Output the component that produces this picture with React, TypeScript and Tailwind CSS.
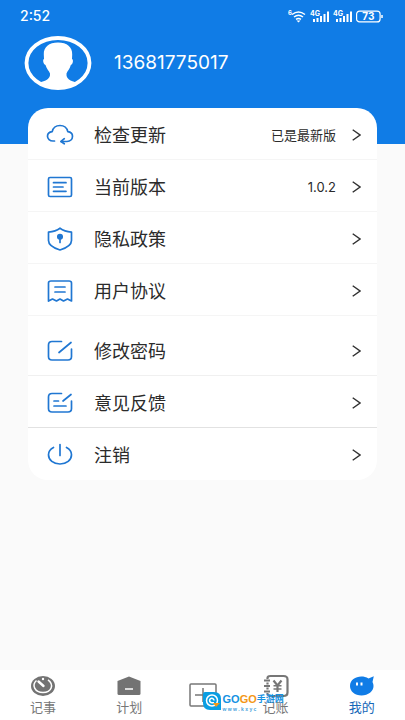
import type { ReactNode } from "react"

type Row = { label: string; value?: string; icon: ReactNode; line?: string }

const stroke = {
  fill: "none",
  stroke: "#2077d2",
  strokeWidth: 1.7,
  strokeLinecap: "round" as const,
  strokeLinejoin: "round" as const,
}

function RowIcon({ children }: { children: ReactNode }) {
  return (
    <svg width="28" height="24" viewBox="0 0 28 24" aria-hidden="true" className="shrink-0" {...stroke}>
      {children}
    </svg>
  )
}

const general: Row[] = [
  {
    label: "检查更新",
    value: "已是最新版",
    icon: (
      <RowIcon>
        <path d="M8.500 18H7C3.800 18 1.500 15.800 1.500 13.300C1.500 10.700 3.600 8.900 6.200 8.600C7 5.200 10 2.500 14 2.500S21 5.200 21.800 8.600C24.500 8.900 26.500 10.700 26.500 13.300C26.500 16.200 24.200 18.500 21 18.500H15" />
        <path d="M18.300 15.700 15 18.500l3.300 2.300" />
      </RowIcon>
    ),
  },
  {
    label: "当前版本",
    value: "1.0.2",
    icon: (
      <RowIcon>
        <rect x="2.500" y="2.500" width="23" height="19" rx="1.500" />
        <path d="M7.500 7.700H20M7.500 12H17M7.500 16.300H20" />
      </RowIcon>
    ),
  },
  {
    label: "隐私政策",
    icon: (
      <RowIcon>
        <path d="M14 1.200C17 3.400 21 4.700 25.500 5.200V13.500C25.500 17.500 20.500 21 14 23C7.500 21 2.500 17.500 2.500 13.500V5.200C7 4.700 11 3.400 14 1.200Z" />
        <circle cx="14" cy="9.800" r="2.200" fill="#2077d2" />
        <path d="M14 10v5.500" />
      </RowIcon>
    ),
  },
  {
    label: "用户协议",
    icon: (
      <RowIcon>
        <path d="M2.500 22V4Q2.500 2 5 2H23Q25.500 2 25.500 4V22L21.500 20 17.500 22 14 20 10.500 22 6.500 20Z" />
        <path d="M9 8h10M9 13h10" />
      </RowIcon>
    ),
  },
]

const account: Row[] = [
  {
    label: "修改密码",
    line: "border-[#f0f0f0]",
    icon: (
      <RowIcon>
        <path d="M15.500 2.500H6Q2.500 2.500 2.500 6V17.500Q2.500 21 6 21H22Q25.500 21 25.500 17.500V10M13 13.500 25 3.500" />
      </RowIcon>
    ),
  },
  {
    label: "意见反馈",
    line: "border-[#e2e2e2]",
    icon: (
      <RowIcon>
        <path d="M15.500 2.500H6Q2.500 2.500 2.500 6V17.500Q2.500 21 6 21H22Q25.500 21 25.500 17.500V10M17 10 25 3.500M8 10h4.500M8 15h12" />
      </RowIcon>
    ),
  },
  {
    label: "注销",
    line: "border-transparent",
    icon: (
      <RowIcon>
        <path d="M14 1.500v11M7.500 4.500C4.500 6 2.500 8.700 2.500 11.800C2.500 17 7.500 21 14 21S25.500 17 25.500 11.800C25.500 8.700 23.500 6 20.500 4.500" />
      </RowIcon>
    ),
  },
]

function MenuRow({ label, value, icon, line = "border-[#f5f5f5]" }: Row) {
  return (
    <li className={`border-b ${line}`}>
      <button type="button" className="flex h-[51px] w-full items-center pl-[18px] pr-4 pt-0.5 text-left">
        {icon}
        <span className="ml-5 flex-1 pt-0.5 text-[18px] leading-6">{label}</span>
        {value && <span className="mr-4 text-[13px] leading-5">{value}</span>}
        <svg width="9" height="12" viewBox="0 0 9 12" fill="none" stroke="#333" strokeWidth="1.400" aria-hidden="true">
          <path d="M.7.700 8 6 .7 11.300" />
        </svg>
      </button>
    </li>
  )
}

function Signal() {
  return (
    <svg width="19" height="13" viewBox="0 0 19 13" fill="#fff" aria-hidden="true">
      <text x="0" y="6" fontSize="7" fontWeight="700">4G</text>
      <path d="M3 9h2v3H3zM6.500 8h2v4h-2zM10 6h2v6h-2zM13.500 4h2v8h-2zM17 1.500h2V12h-2z" />
    </svg>
  )
}

function StatusBar() {
  return (
    <div className="flex h-8 items-center justify-between pl-5 pr-[22px]">
      <span className="text-[14px] font-medium leading-5">2:52</span>
      <div className="flex items-center gap-1">
        <svg width="18" height="13" viewBox="0 0 18 13" fill="none" stroke="#fff" strokeWidth="1.500" aria-label="Wi-Fi 6">
          <text x="0" y="5" fontSize="6" fontWeight="700" fill="#fff" stroke="none">6</text>
          <path d="M4 4.500Q10.500-.5 17 4.500M6 7Q10.500 3.500 15 7M8 9.300Q10.500 7.500 13 9.300" />
          <path d="M8.500 10.500h4L10.500 12.500Z" fill="#fff" stroke="none" />
        </svg>
        <Signal />
        <Signal />
        <svg width="27" height="13" viewBox="0 0 27 13" fill="none" stroke="#fff" aria-label="73%">
          <rect x=".6" y="1.100" width="23.500" height="10.800" rx="3" strokeWidth="1.200" />
          <path d="M26 5v3" strokeWidth="1.500" />
          <text x="12.300" y="10" textAnchor="middle" fontSize="10" fontWeight="700" fill="#fff" stroke="none">73</text>
        </svg>
      </div>
    </div>
  )
}

function Avatar() {
  return (
    <svg width="68" height="54" viewBox="0 0 68 54" aria-hidden="true">
      <ellipse cx="34" cy="27" rx="31.500" ry="25" fill="#107ce6" stroke="#fff" strokeWidth="3.800" />
      <path fill="#fff" d="M34 6.500C25 6.500 19.500 11 19.800 18.500L20 23C18.500 23.500 19 28 21.500 29C22.500 33 25 34.500 26 37.500C26.500 43 22 45 14.500 46.500C25 54 43 54 53.500 46.500C46 45 42 43 42.500 37.500C43.500 34.500 46 33 46.800 29C49.300 28 49.500 23.500 48 23L48.200 18.500C48.500 11 43 6.500 34 6.500Z" />
    </svg>
  )
}

function Watermark() {
  return (
    <div className="absolute left-1/2 top-[22px] flex font-['Liberation_Sans','Noto_Sans_CJK_SC',sans-serif] font-bold">
      <svg width="18" height="18" viewBox="0 0 18 18" aria-hidden="true">
        <path d="M0 2Q0 0 2 0H11Q18 0 18 7V18H7Q0 18 0 11Z" fill="#0a9ee2" />
        <circle cx="9" cy="8.500" r="5.500" fill="none" stroke="#fff" strokeWidth="1.500" />
        <path d="M11 8.500A2.200 2.200 0 1 0 9 10.700H11" fill="none" stroke="#fff" strokeWidth="1.500" />
        <path d="M10 11h7l-4 4Z" fill="#f59a13" />
      </svg>
      <div className="ml-0.5">
        <p className="flex text-[11px] leading-[14px]">
          <span className="text-[#1592e3]">GO</span>
          <span className="text-[#f49716]">GO</span>
          <span className="text-[9px] text-[#1592e3]">手游网</span>
        </p>
        <p className="text-[5px] leading-[6px] text-[#4aa3dc]">w w w . k x y c</p>
      </div>
    </div>
  )
}

const tabs = [
  {
    label: "记事",
    icon: (
      <svg width="26" height="22" viewBox="0 0 26 22" aria-hidden="true">
        <ellipse cx="13" cy="11" rx="12" ry="10" fill="#737373" />
        <path d="M6.500 5.500C1.500 10 4.500 17.500 13 17.500S24.500 9.500 18 4.800" fill="none" stroke="#fff" strokeWidth="1.500" />
        <path d="M8.500 6.500 13.500 11" stroke="#fff" strokeWidth="2.400" strokeLinecap="round" />
        <circle cx="13" cy="4" r="1.200" fill="#fff" />
      </svg>
    ),
  },
  {
    label: "计划",
    icon: (
      <svg width="26" height="22" viewBox="0 0 26 22" aria-hidden="true">
        <path d="M13 1.500 24.500 6V18.500Q24.500 20 23 20H3Q1.500 20 1.500 18.500V6Z" fill="#737373" />
        <path d="M9 14h8" stroke="#fff" strokeWidth="1.500" />
      </svg>
    ),
  },
  {
    label: "",
    icon: (
      <svg width="28" height="24" viewBox="0 0 28 24" fill="none" stroke="#777" strokeWidth="1.500" aria-hidden="true">
        <rect x="1" y="1" width="26" height="22" rx="1" />
        <path d="M6 12h16M14 5v14" />
      </svg>
    ),
  },
  {
    label: "记账",
    icon: (
      <svg width="26" height="24" viewBox="0 0 26 24" fill="none" stroke="#777" strokeWidth="2.200" aria-hidden="true">
        <path d="M4.500 5V4Q4.500 2 7.500 2H20.500Q24.500 2 24.500 5.500V18.500Q24.500 22 20.500 22H7.500Q4.500 22 4.500 20V19M4.500 8.500v2M4.500 13.500v2" />
        <path d="M1 6.500h6M1 12h6M1 17.500h6" />
        <path d="M10.500 6.500 14.500 11.500 18.500 6.500M14.500 11v7" />
        <path d="M10.500 11.800h8M10.500 15h8" strokeWidth="1.600" />
      </svg>
    ),
  },
  {
    label: "我的",
    active: true,
    icon: (
      <svg width="26" height="22" viewBox="0 0 26 22" aria-hidden="true">
        <path d="M19.500 3.500 24.800 1.200 23.500 7C27 14 21 20.500 12.500 20.500C6 20.500 1 16.500 1 11C1 2.500 12 -1 19.500 3.500Z" fill="#107ce6" />
        <path d="M8 7.500v3M12.500 7.500v3" stroke="#fff" strokeWidth="2" />
      </svg>
    ),
  },
]

export default function App() {
  return (
    <div className="flex min-h-screen flex-col bg-[#fafafa] font-['Inter','Noto_Sans_CJK_SC',sans-serif] text-[#2b2b2b]">
      <header className="h-36 shrink-0 bg-[#107ce6] text-white">
        <StatusBar />
        <div className="flex items-center gap-[22px] px-6 pt-1">
          <Avatar />
          <h1 className="text-[19px] leading-6">13681775017</h1>
        </div>
      </header>

      <main className="mx-7 -mt-9 flex-1">
        <div className="overflow-hidden rounded-[20px] bg-white">
          <ul>
            {general.map((row) => (
              <MenuRow key={row.label} {...row} />
            ))}
          </ul>
          <ul className="pt-2">
            {account.map((row) => (
              <MenuRow key={row.label} {...row} />
            ))}
          </ul>
        </div>
      </main>

      <nav className="relative flex h-[50px] shrink-0 bg-white text-[#777]">
        {tabs.map((tab) =>
          tab.label ? (
            <a
              key={tab.label}
              href="#"
              className={`flex flex-1 flex-col items-center pt-[3px] text-[13px] leading-4 ${tab.active ? "text-[#1768b8]" : ""}`}
            >
              <span className="flex h-[26px] items-center">{tab.icon}</span>
              {tab.label}
            </a>
          ) : (
            <button key="add" type="button" aria-label="添加" className="flex w-[60px] items-center justify-center">
              {tab.icon}
            </button>
          ),
        )}
        <Watermark />
      </nav>
    </div>
  )
}
